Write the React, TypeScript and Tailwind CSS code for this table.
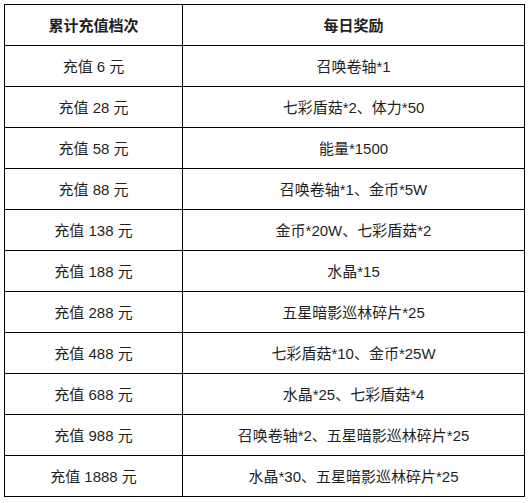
const rows: [string, string][] = [
  ["充值 6 元", "召唤卷轴*1"],
  ["充值 28 元", "七彩盾菇*2、体力*50"],
  ["充值 58 元", "能量*1500"],
  ["充值 88 元", "召唤卷轴*1、金币*5W"],
  ["充值 138 元", "金币*20W、七彩盾菇*2"],
  ["充值 188 元", "水晶*15"],
  ["充值 288 元", "五星暗影巡林碎片*25"],
  ["充值 488 元", "七彩盾菇*10、金币*25W"],
  ["充值 688 元", "水晶*25、七彩盾菇*4"],
  ["充值 988 元", "召唤卷轴*2、五星暗影巡林碎片*25"],
  ["充值 1888 元", "水晶*30、五星暗影巡林碎片*25"],
];

export default function App() {
  return (
    <div
      className="w-[532px] h-[503px] bg-white pt-[4px] pl-[4px] text-[#1f1f1f]"
      style={{ fontFamily: '"Liberation Sans", "Noto Sans CJK SC", sans-serif' }}
    >
      <table className="border-collapse w-[521px] table-fixed text-[15px]">
        <colgroup>
          <col className="w-[178px]" />
          <col />
        </colgroup>
        <thead>
          <tr className="h-[41px]">
            <th className="border border-black text-center font-bold pt-[2px]">累计充值档次</th>
            <th className="border border-black text-center font-bold pt-[2px]">每日奖励</th>
          </tr>
        </thead>
        <tbody>
          {rows.map(([tier, reward]) => (
            <tr key={tier} className="h-[41px]">
              <td className="border border-black text-center pt-[2px]">{tier}</td>
              <td className="border border-black text-center pt-[2px]">{reward}</td>
            </tr>
          ))}
        </tbody>
      </table>
    </div>
  );
}
